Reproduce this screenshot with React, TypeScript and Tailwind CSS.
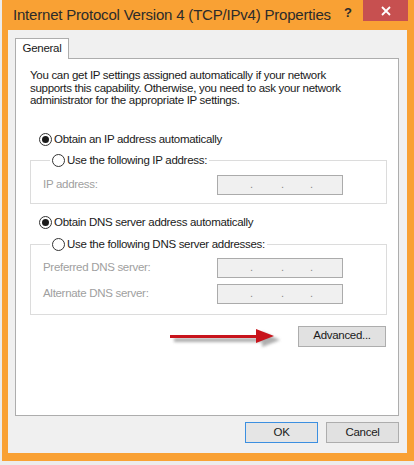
import React from "react";

function Radio({ checked }: { checked?: boolean }) {
  return (
    <span className="flex h-[13px] w-[13px] shrink-0 items-center justify-center rounded-full border border-[#333333] bg-white">
      {checked && <span className="h-[7px] w-[7px] rounded-full bg-[#1b1b1b]" />}
    </span>
  );
}

function IpField() {
  return (
    <div className="flex h-[20px] w-[126px] items-center border border-[#ababab] bg-[#f0f0f0] pl-[32px] text-[11px] leading-none text-[#8a8a8a]">
      <span className="w-[31px]">.</span>
      <span className="w-[29px]">.</span>
      <span>.</span>
    </div>
  );
}

function FieldRow({ label }: { label: string }) {
  return (
    <div className="flex items-center">
      <span className="w-[174px] text-[#a0a0a0]">{label}</span>
      <IpField />
    </div>
  );
}

function GroupBox({ legend, children }: { legend: string; children: React.ReactNode }) {
  return (
    <fieldset className="w-[357px] border border-[#dcdcdc] pl-[12px]">
      <legend className="ml-[7px] flex h-[16px] items-center gap-[2px] px-[2px]">
        <Radio />
        <span>{legend}</span>
      </legend>
      {children}
    </fieldset>
  );
}

function Arrow() {
  return (
    <svg className="absolute left-[152px] top-[268px]" width="116" height="24" viewBox="0 0 116 24">
      <defs>
        <filter id="sh" x="-10%" y="-50%" width="120%" height="200%">
          <feGaussianBlur stdDeviation="1.6" />
        </filter>
      </defs>
      <g filter="url(#sh)" fill="#9a9a9a" opacity="0.8">
        <rect x="6" y="11" width="92" height="4" />
        <polygon points="94,5 112,13 94,20" />
      </g>
      <rect x="2" y="8" width="90" height="3" fill="#c8141c" />
      <polygon points="88,2 106,9 88,16" fill="#c8141c" />
    </svg>
  );
}

export default function App() {
  return (
    <div className="h-[465px] w-[414px] overflow-hidden bg-[#ececec] font-['Liberation_Sans',Arial,sans-serif] text-[11.5px] tracking-[-0.3px] text-[#1a1a1a]">
      <div className="ml-[2px] w-[412px] bg-[#f9a134] pb-[8px] pl-[6px] pr-[7px]">
        <div className="flex h-[30px] items-start">
          <div className="mt-[6px] ml-[5px] text-[15px] leading-[18px] tracking-[-0.2px] text-[#2b2b2b]">
            Internet Protocol Version 4 (TCP/IPv4) Properties
          </div>
          <div className="ml-auto mt-[3px] text-[13px] font-bold tracking-normal text-[#2b2b2b]">?</div>
          <div className="ml-[11px] mr-[-1px] flex h-[21px] w-[45px] items-center justify-center bg-[#c75050]">
            <svg width="10" height="10" viewBox="0 0 10 10">
              <path d="M1 1 L9 9 M9 1 L1 9" stroke="#ffffff" strokeWidth="1.8" />
            </svg>
          </div>
        </div>

        <div className="h-[423px] bg-[#f0f0f0] pl-[7px] pr-[8px] pt-[8px]">
          <div className="relative z-10 -mb-px flex h-[21px] w-[54px] items-center justify-center border border-b-0 border-[#adadad] bg-white">
            General
          </div>
          <div className="relative h-[358px] border border-[#adadad] bg-white pl-[14px] pr-[12px] pt-[10px]">
            <p className="leading-[12.5px]">
              You can get IP settings assigned automatically if your network
              <br />
              supports this capability. Otherwise, you need to ask your network
              <br />
              administrator for the appropriate IP settings.
            </p>

            <label className="mt-[25px] ml-[9px] flex h-[16px] items-center gap-[2px]">
              <Radio checked />
              <span>Obtain an IP address automatically</span>
            </label>

            <div className="mt-[5px]">
              <GroupBox legend="Use the following IP address:">
                <div className="pt-[6px] pb-[8px]">
                  <FieldRow label="IP address:" />
                </div>
              </GroupBox>
            </div>

            <label className="mt-[11px] ml-[9px] flex h-[16px] items-center gap-[2px]">
              <Radio checked />
              <span>Obtain DNS server address automatically</span>
            </label>

            <div className="mt-[6px]">
              <GroupBox legend="Use the following DNS server addresses:">
                <div className="flex flex-col gap-[6px] pt-[5px] pb-[10px]">
                  <FieldRow label="Preferred DNS server:" />
                  <FieldRow label="Alternate DNS server:" />
                </div>
              </GroupBox>
            </div>

            <div className="mt-[11px] flex w-[356px] justify-end">
              <button className="h-[21px] w-[88px] border border-[#adadad] bg-[#e1e1e1] text-[#1a1a1a]">
                Advanced...
              </button>
            </div>

            <Arrow />
          </div>

          <div className="mt-[6px] flex justify-end gap-[8px]">
            <button className="h-[21px] w-[73px] border border-[#3c8fe0] bg-[#e5e5e5] text-[#1a1a1a]">
              OK
            </button>
            <button className="h-[21px] w-[73px] border border-[#adadad] bg-[#e1e1e1] text-[#1a1a1a]">
              Cancel
            </button>
          </div>
        </div>
      </div>
    </div>
  );
}
